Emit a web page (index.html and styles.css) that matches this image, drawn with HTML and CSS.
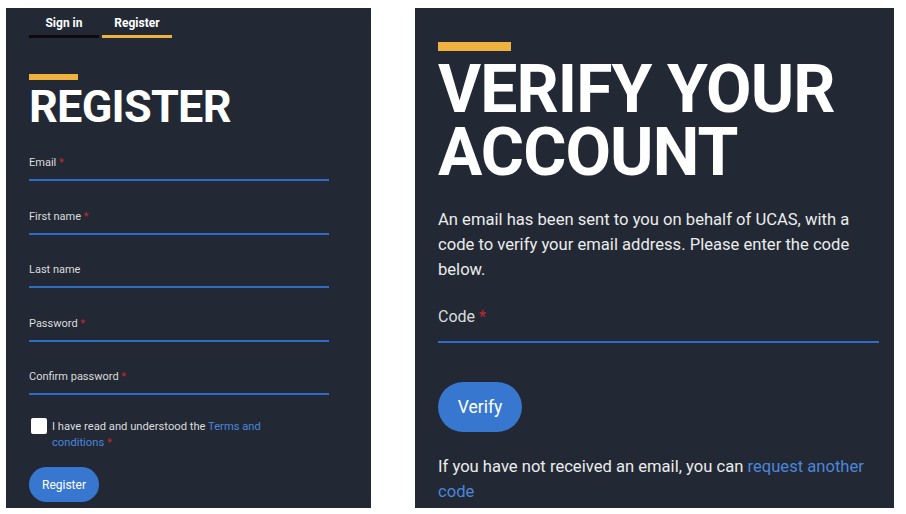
FILE: index.html
```html
<!DOCTYPE html>
<html lang="en">
<head>
    <meta charset="UTF-8">
    <meta name="viewport" content="width=device-width, initial-scale=1.0">
    <title>Register / Verify</title>
    <link rel="stylesheet" href="styles.css">
</head>
<body>
    <div class="screens">
        <div class="panel panel-register">
            <div class="tabs">
                <a class="tab" href="#">Sign in</a>
                <a class="tab active" href="#">Register</a>
            </div>
            <div class="bar"></div>
            <h1>REGISTER</h1>
            <form class="register-form">
                <div class="field">
                    <input type="email" id="email">
                    <label for="email">Email <span class="req">*</span></label>
                </div>
                <div class="field">
                    <input type="text" id="firstName">
                    <label for="firstName">First name <span class="req">*</span></label>
                </div>
                <div class="field">
                    <input type="text" id="lastName">
                    <label for="lastName">Last name</label>
                </div>
                <div class="field">
                    <input type="password" id="password">
                    <label for="password">Password <span class="req">*</span></label>
                </div>
                <div class="field">
                    <input type="password" id="confirmPassword">
                    <label for="confirmPassword">Confirm password <span class="req">*</span></label>
                </div>
                <div class="terms">
                    <span class="checkbox"></span>
                    <span class="terms-text">I have read and understood the <a href="#">Terms and conditions</a>&nbsp;<span class="req">*</span></span>
                </div>
                <button type="submit" class="btn">Register</button>
            </form>
        </div>

        <div class="panel panel-verify">
            <div class="bar"></div>
            <h1>VERIFY YOUR ACCOUNT</h1>
            <p class="intro">An email has been sent to you on behalf of UCAS, with a code to verify your email address. Please enter the code below.</p>
            <div class="field">
                <input type="text" id="code">
                <label for="code">Code <span class="req">*</span></label>
            </div>
            <button type="button" class="btn">Verify</button>
            <p class="resend">If you have not received an email, you can <a href="#">request another code</a></p>
        </div>
    </div>
</body>
</html>
```

FILE: styles.css
```css
body {
    margin: 0;
    background-color: #ffffff;
    font-family: Roboto, "Liberation Sans", Arial, sans-serif;
}
.screens {
    display: flex;
    align-items: flex-start;
    gap: 44px;
    padding: 8px 12px 0 6px;
}
.panel {
    background-color: #222934;
    height: 500px;
    overflow: hidden;
    box-sizing: border-box;
    color: #e6e6e6;
}
a {
    color: #4a86dc;
    text-decoration: none;
}
.req {
    color: #c6262e;
}

/* left: register */
.panel-register {
    width: 365px;
    padding: 0 42px 0 23px;
}
.tabs {
    display: flex;
    gap: 3px;
}
.tab {
    width: 70px;
    padding: 7px 0 4px;
    text-align: center;
    font-size: 12px;
    line-height: 16px;
    font-weight: 700;
    color: #ffffff;
    border-bottom: 3px solid #0b0b0b;
}
.tab.active {
    border-bottom-color: #f0b23e;
}
.bar {
    background-color: #f0b23e;
}
.panel-register .bar {
    width: 49px;
    height: 6px;
    margin-top: 36px;
}
.panel-register h1 {
    margin: 4px 0 0;
    font-size: 45px;
    line-height: 45px;
    font-weight: 700;
    letter-spacing: -0.75px;
    color: #ffffff;
}
.register-form {
    margin-top: 18px;
}
.field {
    position: relative;
}
.field input {
    display: block;
    width: 100%;
    box-sizing: border-box;
    background: transparent;
    border: none;
    border-bottom: 2px solid #2f6cc6;
    outline: none;
    color: #ffffff;
}
.field label {
    position: absolute;
    left: 0;
}
.panel-register .field + .field {
    margin-top: 19.5px;
}
.panel-register .field input {
    height: 34px;
}
.panel-register .field label {
    top: 8px;
    font-size: 11px;
    line-height: 16px;
    color: #dcdcdc;
}
.terms {
    display: flex;
    gap: 5px;
    margin-top: 24px;
    font-size: 11.2px;
    line-height: 16px;
    color: #dcdcdc;
}
.checkbox {
    flex: none;
    width: 16px;
    height: 16px;
    margin: -1px 0 0 2px;
    background-color: #ffffff;
    border-radius: 2px;
}
.terms-text {
    width: 230px;
}
.btn {
    display: block;
    border: none;
    color: #ffffff;
    background-color: #3877d0;
    font-family: inherit;
    cursor: pointer;
}
.panel-register .btn {
    margin-top: 16px;
    width: 70px;
    height: 35px;
    border-radius: 18px;
    font-size: 12px;
}

/* right: verify */
.panel-verify {
    width: 479px;
    padding: 34px 15px 0 23px;
}
.panel-verify .bar {
    width: 73px;
    height: 9px;
}
.panel-verify h1 {
    margin: 7px 0 0;
    font-size: 66px;
    line-height: 63px;
    font-weight: 700;
    letter-spacing: -0.9px;
    color: #ffffff;
}
.intro,
.resend {
    font-size: 16.6px;
    line-height: 25px;
    color: #ececec;
}
.intro {
    margin: 22.5px 0 0;
}
.panel-verify .field {
    margin-top: 11.5px;
}
.panel-verify .field input {
    height: 50px;
}
.panel-verify .field label {
    top: 12px;
    font-size: 16px;
    line-height: 23px;
    color: #dcdcdc;
}
.panel-verify .btn {
    margin-top: 39px;
    width: 84px;
    height: 50px;
    border-radius: 25px;
    font-size: 17.5px;
}
.resend {
    margin: 21.5px 0 0;
}
```
